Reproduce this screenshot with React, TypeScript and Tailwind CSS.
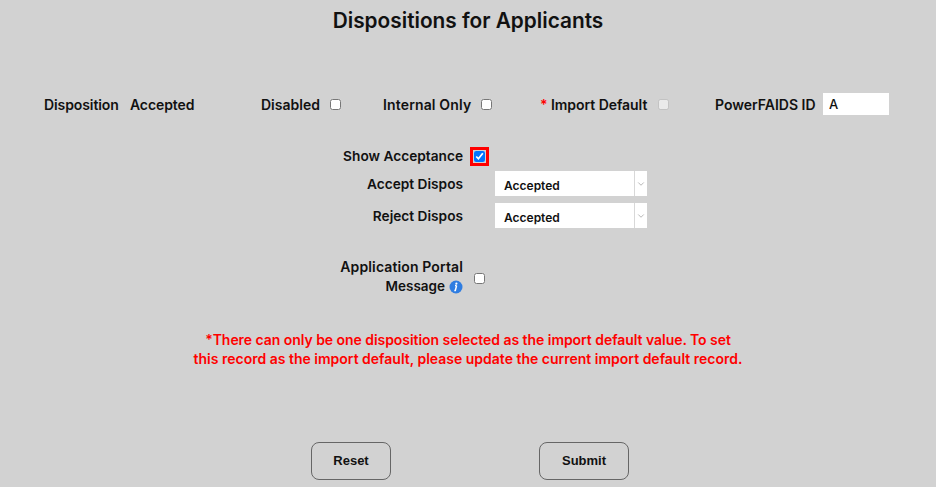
import { ChevronDown } from "lucide-react";

const labelClass = "text-[14px] font-semibold leading-[19px] text-[#111] whitespace-nowrap";
const centerLabel = "text-[13.7px] font-semibold leading-[19px] text-[#111] text-right self-center";

const FakeSelect = ({ value }: { value: string }) => (
  <div className="flex h-[25px] w-[152px] bg-white">
    <div className="flex flex-1 items-center pl-[9px] pt-[5px] text-[12px] font-semibold text-[#111]">
      {value}
    </div>
    <div className="flex w-[13px] items-center justify-center border-l border-[#d8d8d8]">
      <ChevronDown size={10} strokeWidth={2} className="text-[#aaa]" />
    </div>
  </div>
);

const App = () => {
  return (
    <div className="h-[487px] w-[936px] overflow-hidden bg-[#d2d2d2] font-['Inter',sans-serif]">
      <h1 className="pt-[8px] text-center text-[20.8px] font-semibold leading-[26px] text-[#111]">
        Dispositions for Applicants
      </h1>

      <div className="mt-[59px] flex h-[22px] items-center pl-[44px]">
        <span className={`${labelClass} w-[74px] tracking-[-0.1px]`}>Disposition</span>
        <span className={`${labelClass} ml-[12px] w-[131px] tracking-[-0.1px]`}>Accepted</span>
        <span className={`${labelClass} w-[59px]`}>Disabled</span>
        <input type="checkbox" className="ml-[10px] mr-[42px] h-[11px] w-[11px]" />
        <span className={`${labelClass} w-[88px] tracking-[0.15px]`}>Internal Only</span>
        <input type="checkbox" className="ml-[10px] mr-[48px] h-[11px] w-[11px]" />
        <span className={`${labelClass} w-[108px] tracking-[-0.05px]`}>
          <span className="text-[#f00]">*</span> Import Default
        </span>
        <input type="checkbox" disabled className="ml-[10px] mr-[46px] h-[11px] w-[11px]" />
        <span className={`${labelClass} w-[100px]`}>PowerFAIDS ID</span>
        <input
          defaultValue="A"
          className="ml-[8px] h-[22px] w-[66px] bg-white px-[6px] pb-[1px] text-[13px] font-medium text-[#111] outline-none"
        />
      </div>

      <div className="mt-[31px] grid h-[21px] grid-cols-[463px_1fr]">
        <span className={centerLabel}>Show Acceptance</span>
        <div className="flex items-center pl-[11px]">
          <input
            type="checkbox"
            defaultChecked
            className="h-[11px] w-[11px] outline-[3px] outline-offset-[1px] outline-[#f00]"
          />
        </div>
      </div>

      <div className="mt-[4px] grid grid-cols-[463px_1fr] gap-y-[7px]">
        <span className={`${centerLabel} pt-[2px]`}>Accept Dispos</span>
        <div className="pl-[32px]">
          <FakeSelect value="Accepted" />
        </div>
        <span className={`${centerLabel} pt-[2px]`}>Reject Dispos</span>
        <div className="pl-[32px]">
          <FakeSelect value="Accepted" />
        </div>
      </div>

      <div className="mt-[29px] grid grid-cols-[463px_1fr] items-center">
        <div className="pl-[300px] text-right text-[14px] font-semibold leading-[19px] text-[#111]">
          <span className="tracking-[0.12px]">Application Portal</span>{" "}
          <span className="text-[13.5px]">Message</span>
          <svg viewBox="0 0 14 14" className="ml-[4px] inline-block h-[14px] w-[14px] align-[-3px]">
            <circle cx="7" cy="7" r="6.5" fill="#2f7de1" />
            <circle cx="7.4" cy="3.6" r="1.1" fill="#fff" />
            <path d="M7.6 5.6 6.3 10.6h-1M7.6 5.6H6" stroke="#fff" strokeWidth="1.5" fill="none" />
          </svg>
        </div>
        <div className="flex pl-[11px] pt-[3px]">
          <input type="checkbox" className="h-[11px] w-[11px]" />
        </div>
      </div>

      <p className="mt-[34px] text-center text-[14px] font-semibold leading-[19px] text-[#f00]">
        <span className="tracking-[-0.05px]">
          *There can only be one disposition selected as the import default value. To set
        </span>
        <br />
        this record as the import default, please update the current import default record.
      </p>

      <div className="mt-[74px] flex pl-[311px]">
        <button className="h-[38px] w-[80px] rounded-lg border border-[#666] font-['Liberation_Sans',sans-serif] text-[13px] font-bold text-[#111]">
          Reset
        </button>
        <button className="ml-[148px] h-[38px] w-[90px] rounded-lg border border-[#666] font-['Liberation_Sans',sans-serif] text-[13px] font-bold text-[#111]">
          Submit
        </button>
      </div>
    </div>
  );
};

export default App;
